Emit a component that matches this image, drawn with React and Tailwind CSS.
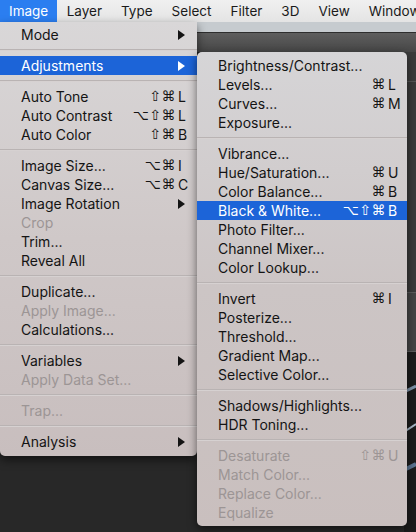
import React from 'react';

const FONT = { fontFamily: 'Inter, "Liberation Sans", sans-serif' };
const SYM = { fontFamily: '"DejaVu Sans", sans-serif' };

const mainItems = [
  { label: 'Mode', arrow: true },
  'sep',
  { label: 'Adjustments', arrow: true, active: true },
  'sep',
  { label: 'Auto Tone', mods: '⇧⌘', keyName: 'L' },
  { label: 'Auto Contrast', mods: '⌥⇧⌘', keyName: 'L' },
  { label: 'Auto Color', mods: '⇧⌘', keyName: 'B' },
  'sep',
  { label: 'Image Size...', mods: '⌥⌘', keyName: 'I' },
  { label: 'Canvas Size...', mods: '⌥⌘', keyName: 'C' },
  { label: 'Image Rotation', arrow: true },
  { label: 'Crop', disabled: true },
  { label: 'Trim...' },
  { label: 'Reveal All' },
  'sep',
  { label: 'Duplicate...' },
  { label: 'Apply Image...', disabled: true },
  { label: 'Calculations...' },
  'sep',
  { label: 'Variables', arrow: true },
  { label: 'Apply Data Set...', disabled: true },
  'sep',
  { label: 'Trap...', disabled: true },
  'sep',
  { label: 'Analysis', arrow: true },
];

const subItems = [
  { label: 'Brightness/Contrast...' },
  { label: 'Levels...', mods: '⌘', keyName: 'L' },
  { label: 'Curves...', mods: '⌘', keyName: 'M' },
  { label: 'Exposure...' },
  'sep',
  { label: 'Vibrance...' },
  { label: 'Hue/Saturation...', mods: '⌘', keyName: 'U' },
  { label: 'Color Balance...', mods: '⌘', keyName: 'B' },
  { label: 'Black & White...', mods: '⌥⇧⌘', keyName: 'B', active: true },
  { label: 'Photo Filter...' },
  { label: 'Channel Mixer...' },
  { label: 'Color Lookup...' },
  'sep',
  { label: 'Invert', mods: '⌘', keyName: 'I' },
  { label: 'Posterize...' },
  { label: 'Threshold...' },
  { label: 'Gradient Map...' },
  { label: 'Selective Color...' },
  'sep',
  { label: 'Shadows/Highlights...' },
  { label: 'HDR Toning...' },
  'sep',
  { label: 'Desaturate', mods: '⇧⌘', keyName: 'U', disabled: true },
  { label: 'Match Color...', disabled: true },
  { label: 'Replace Color...', disabled: true },
  { label: 'Equalize', disabled: true },
];

function Arrow() {
  return (
    <svg width="7" height="10" viewBox="0 0 7 10" fill="currentColor">
      <polygon points="0,0 7,5 0,10" />
    </svg>
  );
}

function MenuRow({ item }) {
  const color = item.active
    ? 'bg-[#1c64d8] text-white'
    : item.disabled
    ? 'text-[#9c9595]'
    : 'text-[#141414]';
  return (
    <div className={`flex items-center h-[19px] pl-[21px] pr-[7px] text-[14px] ${color}`}>
      <span className="whitespace-nowrap">{item.label}</span>
      <div className="ml-auto flex items-center">
        {item.mods && (
          <span className="text-[14px] tracking-[0.5px] mr-[2px]" style={SYM}>{item.mods}</span>
        )}
        <span className="w-[12px] flex items-center">
          {item.keyName}
          {item.arrow && <Arrow />}
        </span>
      </div>
    </div>
  );
}

function Menu({ items }) {
  return items.map((item, i) =>
    item === 'sep' ? (
      <div key={i} className="my-[5px] h-[2px] border-t border-[#b9b3b3] bg-[#d6d1d1]" />
    ) : (
      <MenuRow key={i} item={item} />
    )
  );
}

export default function App() {
  const bar = ['Layer', 'Type', 'Select', 'Filter', '3D', 'View', 'Window'];
  return (
    <div className="relative w-[416px] h-[532px] overflow-hidden bg-[#282828] flex flex-col" style={FONT}>
      {/* menu bar */}
      <div className="h-[22px] flex items-center bg-gradient-to-b from-[#f0f0f0] to-[#e4e4e4] text-[13.5px] text-[#1a1a1a] whitespace-nowrap">
        <div className="h-full flex items-center pl-[9px] pr-[9px] bg-[#2b7ef0] text-white">Image</div>
        {bar.map((b) => (
          <div key={b} className="px-[9.5px]">{b}</div>
        ))}
      </div>

      {/* options bar */}
      <div className="h-[11px] bg-[#c6cbcf] border-b border-[#2e2e2e]" />
      <div className="h-[19px] bg-gradient-to-b from-[#5e5e5e] to-[#474747]" />

      {/* workspace */}
      <div className="flex-1 flex">
        <div className="flex-1 bg-[#282828]" />
        <div className="w-[12px] flex flex-col">
          <div className="h-[30px] bg-[#3c3c3c] border-b border-[#555]" />
          <div className="h-[210px] bg-[#3a3a3a]" />
          <div className="h-[60px] bg-[#454545] border-y border-[#5c5c5c]" />
          <div className="flex-1 bg-[#1c1c1c]">
            <svg width="12" height="170" viewBox="0 0 12 170">
              <path d="M0 40 L12 34" stroke="#7f93a8" strokeWidth="3" />
              <path d="M0 80 L12 72" stroke="#a9b9c9" strokeWidth="2" />
              <path d="M0 118 L12 112" stroke="#5b7592" strokeWidth="4" />
            </svg>
          </div>
        </div>
      </div>

      {/* Image menu */}
      <div className="absolute top-[22px] left-0 w-[197px] pt-[3px] pb-[5px] rounded-b-[5px] bg-gradient-to-b from-[#d9d7d8] via-[#cfc8c8] to-[#c8bebe] shadow-[0_4px_10px_rgba(0,0,0,0.55)]">
        <Menu items={mainItems} />
      </div>

      {/* Adjustments submenu */}
      <div className="absolute top-[52px] left-[197px] w-[210px] py-[4px] rounded-[5px] bg-gradient-to-b from-[#d6d5d7] via-[#ccc5c5] to-[#c9bfbe] shadow-[0_3px_10px_rgba(0,0,0,0.55)]">
        <Menu items={subItems} />
      </div>
    </div>
  );
}
